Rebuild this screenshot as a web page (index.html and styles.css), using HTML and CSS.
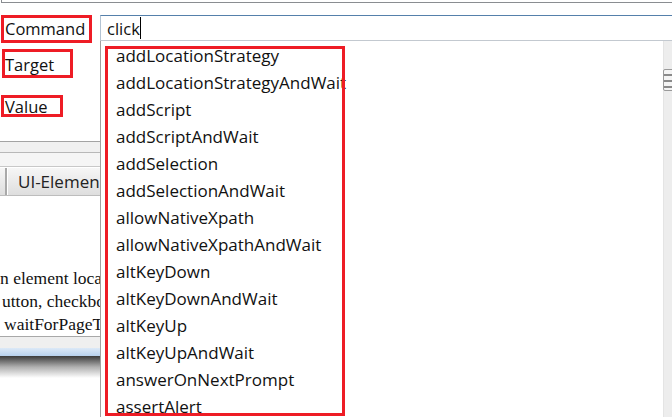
FILE: index.html
```html
<!DOCTYPE html>
<html>
<head>
<meta charset="utf-8">
<link rel="stylesheet" href="styles.css">
</head>
<body>
<div class="page">
  <div class="topbar"></div>
  <div class="form">
    <div class="row row-cmd">
      <span class="label label-cmd">Command</span>
      <div class="input"><span class="value">click</span><span class="caret"></span></div>
    </div>
    <div class="row row-target">
      <span class="label label-target">Target</span>
      <div class="input"></div>
    </div>
    <div class="row row-value">
      <span class="label label-value">Value</span>
      <div class="input"></div>
    </div>
  </div>
  <div class="toolbar">
    <div class="band band-a"></div>
    <div class="band band-b"></div>
  </div>
  <div class="tabs">
    <div class="tab-gap"></div>
    <div class="tab">UI-Elemen</div>
  </div>
  <div class="help">
    <p>n element loca</p>
    <p class="l2">utton, checkbo</p>
    <p class="l3">waitForPageT</p>
  </div>
  <div class="status">
    <div class="status-gray"></div>
    <div class="status-blue"></div>
    <div class="shadow"></div>
  </div>

  <div class="popup">
    <ul class="list">
      <li>addLocationStrategy</li>
      <li>addLocationStrategyAndWait</li>
      <li>addScript</li>
      <li>addScriptAndWait</li>
      <li>addSelection</li>
      <li>addSelectionAndWait</li>
      <li>allowNativeXpath</li>
      <li>allowNativeXpathAndWait</li>
      <li>altKeyDown</li>
      <li>altKeyDownAndWait</li>
      <li>altKeyUp</li>
      <li>altKeyUpAndWait</li>
      <li>answerOnNextPrompt</li>
      <li>assertAlert</li>
    </ul>
    <div class="mark"></div>
    <div class="scrollbar"><div class="thumb"></div></div>
  </div>
</div>
</body>
</html>
```
FILE: styles.css
```css
html, body {
  margin: 0;
  padding: 0;
  background: #fff;
}
.page {
  position: relative;
  width: 672px;
  height: 417px;
  overflow: hidden;
  font-family: "Open Sans", "Noto Sans", sans-serif;
  color: #111;
}
.topbar {
  height: 2px;
  margin-left: 1px;
  border-left: 1px solid #8a8d91;
  border-bottom: 1px solid #8a8d91;
}
.form {
  padding-top: 12px;
}
.row {
  display: flex;
  align-items: flex-start;
}
.label {
  box-sizing: border-box;
  border: 3px solid #ee1c25;
  font-size: 16.5px;
  line-height: 20px;
  padding-left: 1px;
  white-space: nowrap;
}
.label-cmd {
  margin-left: 1px;
  width: 91px;
  height: 28px;
  padding-top: 1px;
}
.row-target {
  margin-top: 6px;
}
.label-target {
  margin-left: 2px;
  width: 71px;
  height: 29px;
  padding-top: 3px;
  padding-left: 0;
}
.row-value {
  margin-top: 17px;
}
.label-value {
  margin-left: 1px;
  width: 62px;
  height: 22px;
  padding-top: 0;
  line-height: 17px;
}
.input {
  box-sizing: border-box;
  height: 26px;
  flex: 1;
  display: flex;
  align-items: center;
  border-top: 1px solid #5580ab;
  border-left: 1px solid #b3c3d3;
  border-bottom: 1px solid #c3c9d0;
  font-size: 16.5px;
  padding-left: 6px;
}
.row-cmd .input {
  margin-left: 8px;
}
.row-target .input {
  margin-left: 27px;
}
.row-value .input {
  margin-left: 37px;
}
.caret {
  width: 1px;
  height: 22px;
  background: #000;
}
.toolbar {
  margin-top: 20px;
}
.band-a {
  height: 10px;
  border-top: 1px solid #a3a3a3;
  background: #f0f0f0;
}
.band-b {
  height: 13px;
  border-top: 1px solid #b8b8b8;
  background: #f5f5f5;
  border-bottom: 1px solid #c8c8c8;
}
.tabs {
  display: flex;
  margin-top: 1px;
  height: 27px;
  background: linear-gradient(#f6f6f6, #dedede);
  border-bottom: 1px solid #bdbdbd;
}
.tab-gap {
  width: 5px;
  border-right: 2px solid #a9a9a9;
  box-shadow: 1px 0 0 #fff;
}
.tab {
  padding-left: 11px;
  font-size: 17px;
  line-height: 27px;
  color: #222;
  white-space: nowrap;
}
.help {
  width: 100px;
  overflow: hidden;
  padding-top: 71px;
  font-family: "Liberation Serif", "Times New Roman", serif;
  font-size: 17.5px;
  line-height: 23px;
  white-space: nowrap;
}
.help p {
  margin: 0;
}
.help .l2 {
  padding-left: 2px;
}
.help .l3 {
  padding-left: 4px;
}
.status-gray {
  height: 11px;
  border-top: 1px solid #a8a8a8;
  background: #efefef;
}
.status-blue {
  height: 8px;
  background: linear-gradient(#dce9f7, #b7d0ec);
}
.shadow {
  height: 22px;
  background: linear-gradient(#3a3a3a, #b0b0b0 50%, #fff);
}
.popup {
  position: absolute;
  left: 100px;
  top: 41px;
  right: 0;
  bottom: 0;
  background: #fff;
  border-left: 1px solid #a0a0a0;
}
.list {
  list-style: none;
  margin: 0;
  padding: 1px 0 0 15px;
  font-size: 17px;
  line-height: 27px;
  color: #111;
}
.mark {
  position: absolute;
  left: 4px;
  top: 5px;
  width: 234px;
  height: 364px;
  border: 3px solid #ee1c25;
}
.scrollbar {
  position: absolute;
  right: 0;
  top: 0;
  bottom: 0;
  width: 8px;
  background: #ededed;
  border-left: 1px solid #e4e4e4;
}
.thumb {
  position: absolute;
  left: -1px;
  top: 28px;
  width: 12px;
  height: 20px;
  border: 1px solid #9a9a9a;
  border-radius: 2px;
  background: repeating-linear-gradient(#f4f4f4 0 4px, #8a8a8a 4px 6px);
}
```
